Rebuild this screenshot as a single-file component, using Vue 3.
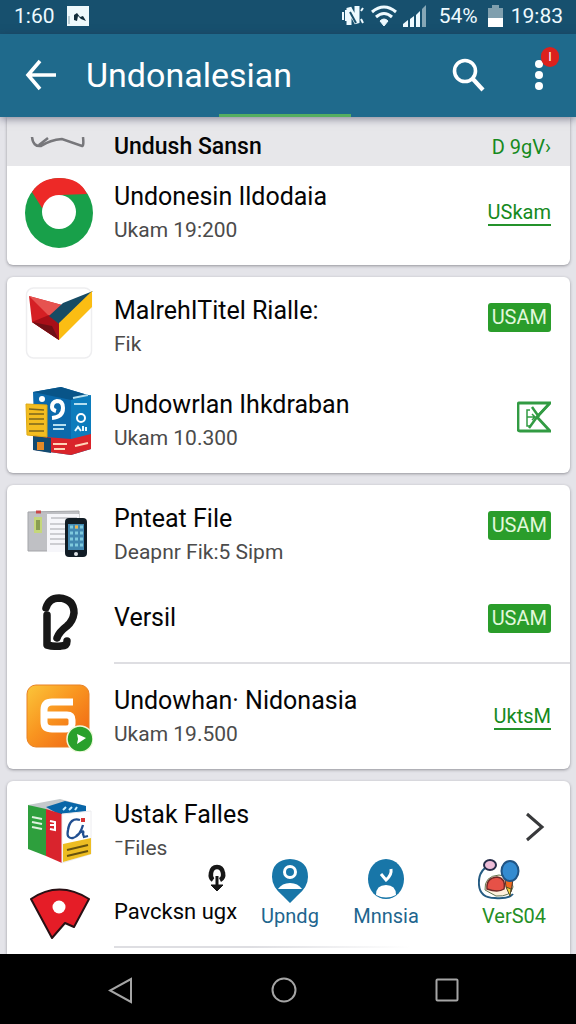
<script setup>
const shortcuts = [
  { id: 'place', label: 'Upndg' },
  { id: 'person', label: 'Mnnsia' },
]
</script>

<template>
  <div class="phone">
    <div class="status">
      <span>1:60</span>
      <svg class="shot" width="22" height="20" viewBox="0 0 22 20">
        <path d="M0 0h22v20H0z" fill="#eef9fc" />
        <path d="M2 10v8" stroke="#8aa5b0" />
        <path d="M7 9l3-2 3 4 3-1 3 5-5-2-3-3-1 5-3-1z" fill="#102c3a" />
      </svg>
      <span class="spacer"></span>
      <svg width="24" height="24" viewBox="0 0 24 24" fill="none" stroke="#eefaff">
        <path d="M2 8v8M5 6v11" stroke-width="2" />
        <path d="M8 21V4l8 15V2" stroke-width="5" />
        <path d="M9 8l6 11" stroke="#174e6a" stroke-width="2" />
        <path d="M20 7l2-3M20 15l2 4" stroke-width="2" />
      </svg>
      <svg width="26" height="22" viewBox="0 0 26 22" fill="none" stroke="#eefaff" stroke-width="3">
        <path d="M1 7q12-10 24 0" />
        <path d="M5 12q8-7 16 0" />
        <path d="M9 16q4-4 8 0l-4 5z" fill="#eefaff" stroke-width="1" />
      </svg>
      <svg width="24" height="22" viewBox="0 0 24 22" fill="#eefaff">
        <path d="M0 22v-3l5-4v7zM7 22v-8l4-3v11zM13 22V10l4-4v16z" />
        <path d="M19 22V4l4-4v22z" fill="#86a7b6" />
      </svg>
      <span class="percent">54%</span>
      <svg width="15" height="22" viewBox="0 0 15 22">
        <path d="M0 3h4V0h7v3h4v10H0z" fill="#7f9fae" />
        <path d="M0 13h15v9H0z" fill="#fff" />
      </svg>
      <span class="clock">19:83</span>
    </div>

    <header class="appbar">
      <button class="plain" aria-label="Back">
        <svg width="32" height="32" viewBox="0 0 32 32" fill="none" stroke="#fff" stroke-width="3.600">
          <path d="M16 2L4 16l12 14M4 16h28" />
        </svg>
      </button>
      <h1>Undonalesian</h1>
      <button class="plain search" aria-label="Search">
        <svg width="34" height="34" viewBox="0 0 34 34" fill="none" stroke="#fff">
          <circle cx="13" cy="13" r="10.5" stroke-width="3.6" />
          <path d="M20 20l11 12" stroke-width="4.2" />
        </svg>
      </button>
      <button class="plain more" aria-label="More options">
        <svg width="10" height="32" viewBox="0 0 10 32" fill="#fff">
          <circle cx="5" cy="5" r="4" /><circle cx="5" cy="16" r="4" /><circle cx="5" cy="27" r="4" />
        </svg>
        <span class="badge">I</span>
      </button>
      <span class="indicator"></span>
    </header>

    <main class="list">
      <section class="card first">
        <div class="row partial">
          <svg class="icon" width="68" height="12" viewBox="0 0 68 12" fill="none" stroke="#77777b" stroke-width="2.5">
            <path d="M7 0q1 10 9 9 9-6 21-7l20 7q2 0 1-9M14 8l9-7" />
          </svg>
          <div class="text"><h2 class="strong">Undush Sansn</h2></div>
          <a href="#" class="action nolines">D 9gV›</a>
        </div>
        <div class="row">
          <svg class="icon" width="68" height="72" viewBox="0 0 68 72">
            <ellipse cx="34" cy="36" rx="34" ry="35" fill="#18a04a" />
            <path d="M7 15Q16 1 34 1q21 0 28 16l-27 1-18 13z" fill="#ed2927" />
            <circle cx="34" cy="35" r="17" fill="#fff" />
          </svg>
          <div class="text"><h2>Undonesin Ildodaia</h2><p>Ukam 19:200</p></div>
          <a href="#" class="action">USkam</a>
        </div>
      </section>

      <section class="card">
        <div class="row">
          <svg class="icon raise" width="68" height="72" viewBox="0 0 68 72">
            <rect x="1.5" y="1" width="65" height="70" rx="7" fill="#fff" stroke="#eeeef0" stroke-width="1.5" />
            <path d="M4 9l33 9-3 17v18L7 35z" fill="#d51f24" />
            <path d="M4 9l33 9-13 11z" fill="#e65350" />
            <path d="M7 35l17-7 10 9v16z" fill="#a80f18" />
            <path d="M34 53L7 35l20 4z" fill="#6f1015" />
            <path d="M24 29l14-13 30-12-34 33z" fill="#174b64" />
            <path d="M67 4v16L34 53V36z" fill="#fbbd13" />
          </svg>
          <div class="text"><h2>MalrehITitel Rialle:</h2><p>Fik</p></div>
          <button class="install">USAM</button>
        </div>
        <div class="row">
          <svg class="icon" width="68" height="70" viewBox="0 0 68 70">
            <path d="M8 6L36 1l30 9v53l-20 6-36-5z" fill="#0b69ab" />
            <path d="M8 6L36 1l30 9-20 4z" fill="#085488" />
            <path d="M46 14l20-5v46l-20 6z" fill="#0c7cbc" />
            <path d="M8 50l38 3 20-5v15l-20 6-36-5z" fill="#d9242a" />
            <path d="M8 50l18 2v15L8 64z" fill="#124a70" />
            <path d="M12 56h7v8h-7z" fill="#e58a26" />
            <path d="M27 32q11-1 11-10 0-7-6-7-5 1-5 6 0 3 4 4" fill="none" stroke="#fff" stroke-width="4" />
            <circle cx="17" cy="13" r="3" fill="#fff" />
            <path d="M28 39h13M28 43h11M48 12l15-3M49 18h13" stroke="#b5dfef" stroke-width="2" />
            <circle cx="56" cy="32" r="4" fill="none" stroke="#fff" stroke-width="2" />
            <path d="M50 45l3-4 3 4m2 0v-5m3 1v4" fill="none" stroke="#e8faff" stroke-width="2" />
            <path d="M28 58h14M29 63h11M50 60l13-3" stroke="#ffd4b8" stroke-width="2" />
            <path d="M1 18l21 1v32L2 49z" fill="#f3bd20" stroke="#dfaa13" />
            <path d="M4 23l15 1M4 28h15M4 33h15M4 38h15M4 45h15" stroke="#7b651c" stroke-width="1.5" />
          </svg>
          <div class="text"><h2>Undowrlan Ihkdraban</h2><p>Ukam 10.300</p></div>
          <button class="plain raise" aria-label="Remove">
            <svg width="34" height="32" viewBox="0 0 34 32" fill="none" stroke="#329b43">
              <path d="M33 2H2q-1 0-1 2v24q0 2 2 2h30L20 16z" stroke-width="2.8" />
              <path d="M33 2L20 16l-8 11M15 6l7 10" stroke-width="2.5" />
              <path d="M13 9h-3v16h4M10 16h8m-3-3l3 3-3 3" stroke-width="1.5" />
            </svg>
          </button>
        </div>
      </section>

      <section class="card">
        <div class="row">
          <svg class="icon" width="68" height="52" viewBox="0 0 68 52">
            <path d="M3 3l51-1v40H3z" fill="#bfc0c4" stroke="#a4a5a9" />
            <path d="M22 5h32v38H22z" fill="#f6f6fa" />
            <path d="M26 9h26M25 15h17M25 20h16M25 25h16M25 30h16M25 35h16" stroke="#a4a5aa" />
            <path d="M9 8h8v16H9z" fill="#c5d77b" /><path d="M11 11h4v10h-4z" fill="#899d51" />
            <path d="M11 3h5" stroke="#c94848" stroke-width="3" />
            <rect x="40" y="9" width="22" height="39" rx="4" fill="#111c25" />
            <path d="M43 15h16v26H43z" fill="#4288b1" />
            <path d="M45 18h3m2 0h3m2 0h3M45 24h3m2 0h3m2 0h3M45 30h3m2 0h3m2 0h3M45 36h3m2 0h3m2 0h3" stroke="#7fcadd" stroke-width="3" />
            <path d="M50 18h3" stroke="#efb44b" stroke-width="3" />
            <circle cx="51" cy="45" r="2" fill="#e0e4e8" />
          </svg>
          <div class="text"><h2>Pnteat File</h2><p>Deapnr Fik:5 Sipm</p></div>
          <button class="install">USAM</button>
        </div>
        <div class="row single">
          <svg class="icon" width="68" height="56" viewBox="0 0 68 56" fill="none" stroke="#171717" stroke-width="7.500" stroke-linecap="round" stroke-linejoin="round">
            <path d="M21 14Q24 4 34 4q15 1 15 15-1 8-7 13-8 6-10 12" />
            <path d="M22 21v30q8 2 14 1 6 0 6-5" />
          </svg>
          <div class="text"><h2>Versil</h2></div>
          <button class="install">USAM</button>
        </div>
        <hr />
        <div class="row last">
          <svg class="icon" width="68" height="70" viewBox="0 0 68 70">
            <defs>
              <linearGradient id="orange" x1="0" y1="0" x2="1" y2="1">
                <stop offset="0" stop-color="#fbc63a" /><stop offset=".45" stop-color="#f99520" /><stop offset="1" stop-color="#ee5f12" />
              </linearGradient>
            </defs>
            <rect x="2" y="3" width="62" height="62" rx="9" fill="url(#orange)" stroke="#e98124" />
            <path d="M48 20H27q-8 0-8 8v12q0 7 8 7h14q6 0 6-5v-4q0-5-5-5H22" fill="none" stroke="#fff" stroke-width="7" />
            <circle cx="55" cy="57" r="13" fill="#29a02c" stroke="#eef9dc" stroke-width="1.5" />
            <path d="M52 52l9 4-9 6 1-5z" fill="#fff" />
          </svg>
          <div class="text"><h2>Undowhan· Nidonasia</h2><p>Ukam 19.500</p></div>
          <a href="#" class="action">UktsM</a>
        </div>
      </section>

      <section class="card tail">
        <div class="row">
          <svg class="icon" width="68" height="66" viewBox="0 0 68 66">
            <path d="M3 7L35 1l26 7v9l-26 1z" fill="#c4c9cc" />
            <path d="M21 9L40 3l21 5v8l-26 1z" fill="#0866a8" />
            <path d="M38 12l3-3m3 3l3-3m3 3l2-3" stroke="#c8eeff" stroke-width="2" />
            <path d="M3 7l18 4v47L3 51z" fill="#2e9f3d" />
            <path d="M21 11l16 5v49l-16-7z" fill="#d9242d" />
            <path d="M37 16l29-3v43l-29 9z" fill="#fff" stroke="#ececef" />
            <path d="M38 46l28-6v16l-28 8z" fill="#edbd22" />
            <path d="M7 19l10 2M7 24l10 2M7 29l10 2" stroke="#dff1df" stroke-width="2" />
            <path d="M25 23l5 1v8l-5-1m0-4h5" fill="none" stroke="#fff" stroke-width="2" />
            <path d="M55 22q-10-3-12 10-2 9 5 8 7-2 10-13m-7 11q9-8 7-2l1 3 4-1" fill="none" stroke="#204f91" stroke-width="2.3" />
            <path d="M56 20h4v4h-4z" fill="#db3333" />
            <path d="M42 52l21-5M42 58l21-5" stroke="#66520f" stroke-width="2" />
          </svg>
          <div class="text"><h2>Ustak Falles</h2><p>¯Files</p></div>
          <button class="plain raise chevron" aria-label="Open">
            <svg width="20" height="30" viewBox="0 0 20 30" fill="none" stroke="#38393b" stroke-width="3">
              <path d="M2 2l15 13L2 28" />
            </svg>
          </button>
        </div>
        <div class="row short">
          <svg class="icon" width="68" height="54" viewBox="0 0 68 54">
            <path d="M6 14Q34-5 64 14L49 42l-9-4-13 15z" fill="#e51d27" stroke="#281014" stroke-width="2" stroke-linejoin="round" />
            <circle cx="34" cy="22" r="6.5" fill="#fff" />
          </svg>
          <div class="text"><h2 class="small">Pavcksn ugx</h2></div>
        </div>
        <hr class="fade" />
        <nav class="shortcuts" aria-label="Shortcuts">
          <button class="plain key" aria-label="Key">
            <svg width="20" height="28" viewBox="0 0 20 28" fill="none" stroke="#171717" stroke-width="4.500">
              <path d="M6 16q-3-2-2-7 1-6 6-6t6 6q1 5-3 7" />
              <path d="M10 12v10" stroke-width="3" />
              <path d="M4 21l6 6 6-6z" fill="#171717" stroke-width="1" />
            </svg>
          </button>
          <button v-for="s in shortcuts" :key="s.id" class="plain shortcut">
            <svg v-if="s.id === 'place'" width="38" height="44" viewBox="0 0 38 44">
              <path d="M19 0q18 1 18 18 0 10-11 19l-7 7-7-7Q1 28 1 18 1 1 19 0z" fill="#1876a8" />
              <circle cx="19" cy="13" r="5.5" fill="none" stroke="#fff" stroke-width="3" />
              <path d="M7 30q4-6 12-6t12 6z" fill="#fff" />
            </svg>
            <svg v-else width="38" height="44" viewBox="0 0 38 44">
              <ellipse cx="19" cy="20" rx="18" ry="20" fill="#1876a8" />
              <path d="M9 36q0-10 10-10t10 10q-10 5-20 0z" fill="#fff" />
              <path d="M14 15l5 6q6-5 5-11" fill="none" stroke="#fff" stroke-width="3" />
            </svg>
            <span>{{ s.label }}</span>
          </button>
          <button class="plain shortcut version">
            <svg width="44" height="44" viewBox="0 0 44 44">
              <path d="M7 9Q0 15 1 26q1 13 16 13 14 1 18-4" fill="#fff" stroke="#255c83" stroke-width="2" />
              <path d="M7 31q-1-14 14-15 13 1 14 12-2 10-17 9z" fill="#fff0dd" stroke="#647552" />
              <ellipse cx="12" cy="6" rx="6" ry="5" fill="#edbdd8" stroke="#262c49" stroke-width="2" />
              <path d="M27 20h8l-2 13-5-5z" fill="#ef6b20" stroke="#4f3428" />
              <path d="M28 28l5 2-1 7z" fill="#f6d73c" stroke="#4e4d27" />
              <ellipse cx="32" cy="12" rx="8.500" ry="10" fill="#348bd0" stroke="#205484" stroke-width="2" />
              <path d="M9 30q-1-11 10-12 9 1 7 12-6 4-17 0z" fill="#e65147" stroke="#6e2827" stroke-width="1.5" />
            </svg>
            <span>VerS04</span>
          </button>
        </nav>
      </section>
    </main>

    <nav class="system" aria-label="System">
      <button class="plain" aria-label="Back">
        <svg width="26" height="28" viewBox="0 0 26 28" fill="none" stroke="#a5a5a5" stroke-width="2"><path d="M23 3v23L2 14.500z" /></svg>
      </button>
      <button class="plain" aria-label="Home">
        <svg width="28" height="28" viewBox="0 0 28 28" fill="none" stroke="#a5a5a5" stroke-width="2"><circle cx="14" cy="14" r="11.500" /></svg>
      </button>
      <button class="plain" aria-label="Recent apps">
        <svg width="24" height="24" viewBox="0 0 24 24" fill="none" stroke="#a5a5a5" stroke-width="2"><rect x="1.500" y="1.500" width="21" height="21" rx="1" /></svg>
      </button>
    </nav>
  </div>
</template>

<style>
body {
  background: #e4e4e9;
}
</style>

<style scoped>
* {
  box-sizing: border-box;
}
svg {
  display: block;
  flex: none;
}
h1, h2, p {
  margin: 0;
  font-weight: 400;
  white-space: nowrap;
}
.phone {
  display: flex;
  flex-direction: column;
  height: 100vh;
  overflow: hidden;
  background: #e4e4e9;
  font-family: Roboto, "Liberation Sans", sans-serif;
  color: #050505;
}
.plain {
  display: flex;
  justify-content: center;
  align-items: center;
  padding: 0;
  border: 0;
  background: none;
  font: inherit;
  color: inherit;
}
.status {
  display: flex;
  flex: none;
  align-items: center;
  gap: 6px;
  height: 34px;
  padding: 0 13px 2px 14px;
  background: #17506e;
  color: #edfaff;
  font-size: 21px;
}
.shot {
  margin-left: 6px;
}
.spacer {
  flex: 1;
}
.percent {
  margin: 0 4px 0 6px;
}
.clock {
  margin-left: 2px;
}
.appbar {
  position: relative;
  z-index: 1;
  display: flex;
  flex: none;
  align-items: center;
  height: 83px;
  padding: 0 32px 2px 24px;
  background: #1f6a8c;
  color: #fff;
  box-shadow: 0 2px 8px rgba(40, 40, 70, 0.5);
}
h1 {
  flex: 1;
  margin-left: 30px;
  font-size: 34px;
  line-height: 40px;
}
.search {
  margin-right: 48px;
}
.more {
  position: relative;
}
.badge {
  position: absolute;
  top: -12px;
  left: 7px;
  width: 18px;
  height: 20px;
  border-radius: 9px;
  background: #dc211d;
  font-size: 13px;
  line-height: 20px;
}
.indicator {
  position: absolute;
  bottom: 0;
  left: 38%;
  width: 23%;
  height: 3px;
  background: #55ae60;
}
.list {
  display: flex;
  flex: 1;
  flex-direction: column;
  gap: 12px;
  min-height: 0;
  overflow: hidden;
  padding: 0 6px 0 7px;
}
.card {
  position: relative;
  flex: none;
  padding: 3px 0 5px;
  border-radius: 6px;
  background: #fff;
  box-shadow: 0 1px 3px rgba(50, 50, 60, 0.45);
}
.first {
  padding-top: 0;
  border-radius: 0 0 6px 6px;
}
.tail {
  flex: 1;
  padding-bottom: 0;
  border-radius: 6px 6px 0 0;
}
.row {
  display: flex;
  align-items: center;
  height: 94px;
  padding: 0 19px 0 18px;
}
.partial {
  height: 49px;
  padding-top: 11px;
  background: #e7e7ea;
}
.partial .icon {
  margin-bottom: 8px;
}
.single {
  height: 80px;
}
.last {
  margin-top: 6px;
}
.short {
  height: 68px;
}
.text {
  flex: 1;
  min-width: 0;
  margin-left: 21px;
}
h2 {
  font-size: 25px;
  line-height: 34px;
}
.strong {
  font-size: 23px;
  font-weight: 500;
}
.small {
  font-size: 22px;
}
p {
  color: #4b4b4b;
  font-size: 21px;
  line-height: 32px;
}
.raise {
  margin-bottom: 8px;
}
.single .text {
  margin-bottom: 8px;
}
.install {
  height: 29px;
  padding: 0 4px;
  margin-bottom: 20px;
  border: 0;
  border-radius: 3px;
  background: #2a9d2b;
  color: #e2f8dc;
  font: 20px/29px Roboto, "Liberation Sans", sans-serif;
}
.single .install {
  margin-bottom: 8px;
}
.chevron {
  margin-right: 6px;
}
.action {
  border-bottom: 2px solid #24922b;
  color: #168a1d;
  font-size: 20px;
  line-height: 24px;
  text-decoration: none;
}
.nolines {
  border: 0;
}
hr {
  height: 2px;
  margin: 0 0 0 107px;
  border: 0;
  background: #dedee2;
}
.fade {
  background: linear-gradient(to right, #dedee2 30%, #fff 65%);
}
.shortcuts {
  position: absolute;
  top: 78px;
  right: 19px;
  left: 193px;
  display: flex;
  align-items: flex-start;
}
.key {
  width: 34px;
  height: 38px;
  margin-right: 8px;
}
.shortcut {
  flex-direction: column;
  width: 96px;
  color: #21658e;
  font-size: 20px;
  line-height: 26px;
}
.version {
  align-items: flex-start;
  width: 73px;
  margin-left: auto;
  color: #258f25;
}
.version span {
  margin-left: 4px;
}
.system {
  display: grid;
  flex: none;
  grid-template-columns: repeat(3, 1fr);
  height: 70px;
  padding: 2px 48px 0 40px;
  background: #000;
}
</style>
